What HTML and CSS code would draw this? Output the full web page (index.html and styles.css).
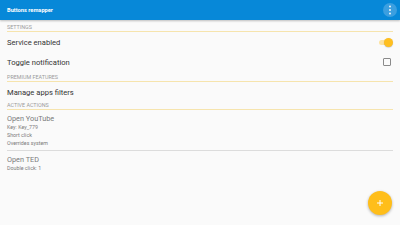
FILE: index.html
```html
<!DOCTYPE html>
<html>
<head>
<meta charset="utf-8">
<link rel="stylesheet" href="styles.css">
</head>
<body>
<div class="app">
  <header class="bar">
    <span class="title">Buttons remapper</span>
    <span class="more">
      <svg width="4" height="10" viewBox="0 0 4 10"><circle cx="2" cy="1.5" r="0.9" fill="#fff"/><circle cx="2" cy="5" r="0.9" fill="#fff"/><circle cx="2" cy="8.5" r="0.9" fill="#fff"/></svg>
    </span>
  </header>
  <main class="content">
    <div class="label l-settings">SETTINGS</div>
    <div class="row">
      <span class="row-text">Service enabled</span>
      <span class="switch"><span class="thumb"></span></span>
    </div>
    <div class="row">
      <span class="row-text">Toggle notification</span>
      <span class="check"></span>
    </div>
    <div class="label l-premium">PREMIUM FEATURES</div>
    <div class="row row-tall">
      <span class="row-text">Manage apps filters</span>
    </div>
    <div class="label l-active">ACTIVE ACTIONS</div>
    <div class="action first">
      <div class="a-title">Open YouTube</div>
      <div class="a-sub">Key: Key_779</div>
      <div class="a-sub">Short click</div>
      <div class="a-sub">Overrides system</div>
    </div>
    <div class="action">
      <div class="a-title">Open TED</div>
      <div class="a-sub">Double click: 1</div>
    </div>
  </main>
  <div class="fab">
    <svg width="8" height="8" viewBox="0 0 8 8"><path d="M4 1v6M1 4h6" stroke="#fff" stroke-width="1" fill="none"/></svg>
  </div>
</div>
</body>
</html>
```

FILE: styles.css
```css
html, body {
  margin: 0;
  padding: 0;
}
body {
  width: 400px;
  height: 225px;
  overflow: hidden;
  background: #fafafa;
  font-family: Roboto, "Liberation Sans", sans-serif;
}
.app {
  position: relative;
  width: 400px;
  height: 225px;
}
.bar {
  height: 20px;
  background: #0788d8;
  display: flex;
  align-items: center;
  justify-content: space-between;
  padding: 0 3px 0 7px;
  box-shadow: 0 1px 2px rgba(0,0,0,0.25);
  position: relative;
  z-index: 1;
}
.title {
  color: #fff;
  font-weight: bold;
  font-size: 5.7px;
  line-height: 8px;
}
.more {
  width: 14px;
  height: 14px;
  border-radius: 50%;
  background: #3b9fe0;
  display: flex;
  align-items: center;
  justify-content: center;
}
.more svg { display: block; }
.content {
  display: flex;
  flex-direction: column;
  padding: 0 7px;
}
.label {
  display: flex;
  align-items: flex-end;
  font-size: 5.4px;
  line-height: 5px;
  color: #9a9a9a;
  padding-bottom: 1px;
  border-bottom: 1px solid #f6e4ad;
  box-sizing: content-box;
}
.l-settings { height: 10px; }
.l-premium { height: 8px; }
.l-active { height: 5px; padding-bottom: 1px; }
.row {
  height: 20px;
  display: flex;
  align-items: center;
  justify-content: space-between;
}
.row-tall { height: 21px; }
.row-text {
  font-size: 7.6px;
  color: #333;
}
.switch {
  position: relative;
  width: 13px;
  height: 5px;
  border-radius: 3px;
  background: #fde3a0;
  margin-right: 1px;
}
.thumb {
  position: absolute;
  right: -1px;
  top: -2px;
  width: 9px;
  height: 9px;
  border-radius: 50%;
  background: #ffbf1f;
  box-shadow: 0 0.5px 1px rgba(0,0,0,0.25);
}
.check {
  width: 6px;
  height: 6px;
  border: 1px solid #8a8a8a;
  border-radius: 1px;
  margin-right: 2px;
}
.action {
  padding: 4px 0 3px;
  display: flex;
  flex-direction: column;
}
.action.first {
  border-bottom: 1px solid #dcdcdc;
}
.a-title {
  font-size: 7.3px;
  line-height: 9px;
  color: #7a7a7a;
}
.a-sub {
  font-size: 5.3px;
  line-height: 8px;
  color: #7a7a7a;
}
.fab {
  position: absolute;
  right: 8px;
  bottom: 10px;
  width: 24px;
  height: 24px;
  border-radius: 50%;
  background: #ffbe1a;
  box-shadow: 0 1px 3px rgba(0,0,0,0.3);
  display: flex;
  align-items: center;
  justify-content: center;
}
.fab svg { display: block; }
```
